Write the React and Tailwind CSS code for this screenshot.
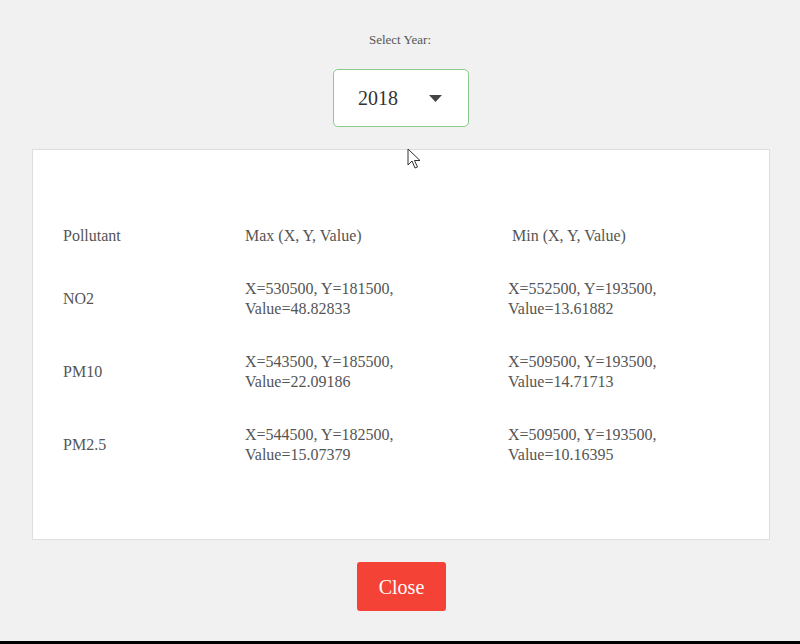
import React, { useState } from 'react';

const rows = [
  { name: 'NO2', max: ['X=530500, Y=181500,', 'Value=48.82833'], min: ['X=552500, Y=193500,', 'Value=13.61882'] },
  { name: 'PM10', max: ['X=543500, Y=185500,', 'Value=22.09186'], min: ['X=509500, Y=193500,', 'Value=14.71713'] },
  { name: 'PM2.5', max: ['X=544500, Y=182500,', 'Value=15.07379'], min: ['X=509500, Y=193500,', 'Value=10.16395'] },
];

export default function App() {
  const [year] = useState('2018');

  return (
    <div
      className="relative h-[644px] w-[800px] overflow-hidden bg-[#f1f1f1] flex flex-col"
      style={{ fontFamily: '"Liberation Serif", "Times New Roman", serif' }}
    >
      <div className="pt-[31px] text-center text-[13px] leading-[17px] text-[#555]">Select Year:</div>

      <div className="mt-[21px] ml-[333px] w-[136px] h-[58px] rounded-[5px] border border-[#8cc88c] bg-white flex items-center pl-[24px] pr-[26px]">
        <span className="text-[20px] text-[#333] flex-1">{year}</span>
        <svg width="13" height="7" viewBox="0 0 13 7">
          <path d="M0 0 L13 0 L6.5 7 Z" fill="#444" />
        </svg>
      </div>

      <div className="mt-[22px] ml-[32px] w-[738px] h-[391px] border border-[#dedede] bg-white pt-[76px] pl-[30px]">
        <div className="grid grid-cols-[182px_263px_1fr] gap-y-[33px] items-center text-[16px] leading-[20px] text-[#555]">
          <div>Pollutant</div>
          <div>Max (X, Y, Value)</div>
          <div className="pl-[4px]">Min (X, Y, Value)</div>
          {rows.map((r) => (
            <React.Fragment key={r.name}>
              <div>{r.name}</div>
              <div>
                <div>{r.max[0]}</div>
                <div>{r.max[1]}</div>
              </div>
              <div>
                <div>{r.min[0]}</div>
                <div>{r.min[1]}</div>
              </div>
            </React.Fragment>
          ))}
        </div>
      </div>

      <button className="mt-[22px] ml-[357px] w-[89px] h-[49px] rounded-[3px] bg-[#f44336] text-white text-[20px]">
        Close
      </button>

      <div className="mt-auto h-[3px] bg-black" />

      {/* mouse pointer */}
      <svg className="absolute left-[407px] top-[148px]" width="14" height="22" viewBox="0 0 14 22">
        <path d="M1 1 L1 17 L5 13 L8 20 L10.5 19 L7.5 12.5 L13 12.5 Z" fill="white" stroke="#333" strokeWidth="1" strokeLinejoin="round" />
      </svg>
    </div>
  );
}
